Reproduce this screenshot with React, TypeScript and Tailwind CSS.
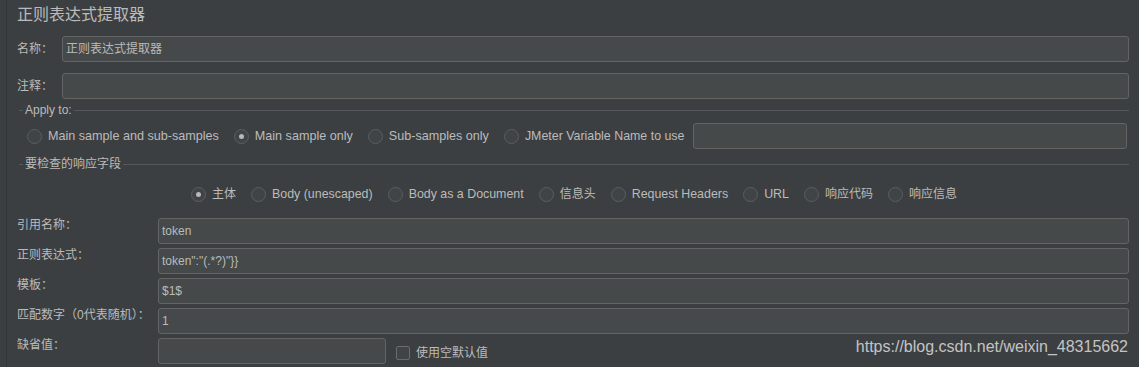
const sans = { fontFamily: '"Liberation Sans", "Noto Sans CJK SC", sans-serif' };

const Radio = ({ label, checked = false, size = "text-[12.4px]" }: { label: string; checked?: boolean; size?: string }) => {
  return (
    <div className="flex items-center gap-[6px]">
      <span className="flex h-[15px] w-[15px] items-center justify-center rounded-full border border-[#5b5e60] bg-[#404446]">
        {checked && <span className="h-[5px] w-[5px] rounded-full bg-[#b8b8b8]" />}
      </span>
      <span className={`${size} leading-[16px] text-[#bbbbbb]`}>{label}</span>
    </div>
  );
};

const Field = ({ className = "", value = "" }: { className?: string; value?: string }) => {
  return (
    <div
      className={`flex h-[26px] items-center rounded-[3px] border border-[#646464] bg-[#45494a] px-[3px] text-[12px] text-[#bbbbbb] ${className}`}
    >
      {value}
    </div>
  );
};

const Legend = ({ title }: { title: string }) => {
  return (
    <div className="ml-[2px] flex items-center">
      <div className="h-px w-[4px] bg-[#55585a]" />
      <span className="px-[2px] text-[12px] leading-[16px] text-[#bbbbbb]">{title}</span>
      <div className="h-px flex-1 bg-[#55585a]" />
    </div>
  );
};

const App = () => {
  const rows = [
    { label: "引用名称：", value: "token" },
    { label: "正则表达式：", value: 'token":"(.*?)"}}' },
    { label: "模板：", value: "$1$" },
    { label: "匹配数字（0代表随机）：", value: "1" },
  ];

  return (
    <div className="relative flex h-[367px] w-full overflow-hidden bg-[#3c3f41]" style={sans}>
      <div className="w-[7px] border-r border-[#333537]" />

      <div className="flex flex-1 flex-col pl-[10px] pr-[10px]">
        <div className="pt-[4px] text-[16px] leading-[22px] text-[#bbbbbb]">正则表达式提取器</div>

        <div className="mt-[10px] flex items-center">
          <span className="w-[45px] text-[12px] text-[#bbbbbb]">名称：</span>
          <Field className="flex-1" value="正则表达式提取器" />
        </div>

        <div className="mt-[11px] flex items-center">
          <span className="w-[45px] text-[12px] text-[#bbbbbb]">注释：</span>
          <Field className="flex-1" />
        </div>

        <div className="mt-[3px]">
          <Legend title="Apply to:" />
          <div className="mt-[5px] flex items-center gap-[15px] pl-[10px] pr-[2px]">
            <Radio label="Main sample and sub-samples" size="text-[12.6px]" />
            <Radio label="Main sample only" size="text-[12.6px]" checked />
            <Radio label="Sub-samples only" size="text-[12.6px]" />
            <div className="flex flex-1 items-center gap-[9px]">
              <Radio label="JMeter Variable Name to use" size="text-[12.4px]" />
              <Field className="flex-1" />
            </div>
          </div>
        </div>

        <div className="mt-[7px]">
          <Legend title="要检查的响应字段" />
          <div className="mt-[14px] flex items-center justify-center gap-[15px] pl-[2px]">
            <Radio label="主体" checked size="text-[12px]" />
            <Radio label="Body (unescaped)" />
            <Radio label="Body as a Document" />
            <Radio label="信息头" size="text-[12px]" />
            <Radio label="Request Headers" />
            <Radio label="URL" />
            <Radio label="响应代码" size="text-[12px]" />
            <Radio label="响应信息" size="text-[12px]" />
          </div>
        </div>

        <div className="mt-[16px] flex flex-col gap-[4px]">
          {rows.map((r) => (
            <div key={r.label} className="flex items-start">
              <span className="-mt-px w-[141px] text-[12px] leading-[16px] text-[#bbbbbb]">{r.label}</span>
              <Field className="flex-1" value={r.value} />
            </div>
          ))}
          <div className="flex items-start">
            <span className="-mt-px w-[141px] text-[12px] leading-[16px] text-[#bbbbbb]">缺省值：</span>
            <Field className="w-[228px]" />
            <div className="ml-[10px] mt-[7px] flex items-center gap-[6px]">
              <span className="h-[14px] w-[14px] rounded-[2px] border border-[#6b6b6b] bg-[#404446]" />
              <span className="text-[12px] leading-[16px] text-[#bbbbbb]">使用空默认值</span>
            </div>
          </div>
        </div>
      </div>

      <div className="absolute right-[11px] top-[337px] text-[16px] leading-[20px] text-[#c4c4c4]">
        https://blog.csdn.net/weixin_48315662
      </div>
    </div>
  );
};

export default App;
